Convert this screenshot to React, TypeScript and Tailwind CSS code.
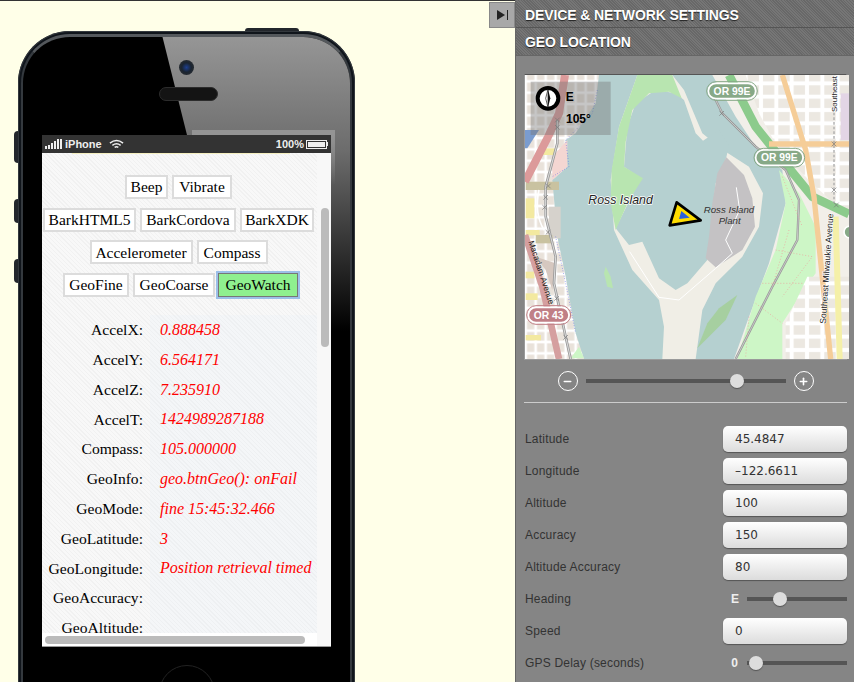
import { Minus, Plus } from "lucide-react";

const buttonRows = [
  [["Beep", "w-[43px]"], ["Vibrate", "w-[60px]"]],
  [["BarkHTML5", "w-[93px]"], ["BarkCordova", "w-[96px]"], ["BarkXDK", "w-[74px]"]],
  [["Accelerometer", "w-[103px]"], ["Compass", "w-[71px]"]],
  [["GeoFine", "w-[66px]"], ["GeoCoarse", "w-[82px]"]],
];

const readings = [
  ["AccelX:", "0.888458"],
  ["AccelY:", "6.564171"],
  ["AccelZ:", "7.235910"],
  ["AccelT:", "1424989287188"],
  ["Compass:", "105.000000"],
  ["GeoInfo:", "geo.btnGeo(): onFail"],
  ["GeoMode:", "fine 15:45:32.466"],
  ["GeoLatitude:", "3"],
  ["GeoLongitude:", "Position retrieval timed"],
  ["GeoAccuracy:", ""],
  ["GeoAltitude:", ""],
];

const railMarks = [
  [125, 150], [125, 172], [98, 348], [90, 382], [87, 412], [97, 487], [123, 685], [150, 802],
  [618, 130], [955, 222], [955, 360], [962, 405],
];

const hatch =
  "bg-[repeating-linear-gradient(45deg,#686868_0,#686868_1px,#767676_1px,#767676_2px)]";

function Field({ label, value }: { label: string; value: string }) {
  return (
    <div className="flex h-[26px] items-center justify-between">
      <span className="ml-px text-[12px] tracking-[0.2px] text-[#333]">{label}</span>
      <div className="flex h-[26px] w-[124px] items-center rounded-[5px] bg-gradient-to-b from-white to-[#dcdcdc] pl-3 font-['DejaVu_Sans',sans-serif] text-[12px] text-[#333] shadow-[0_1px_1px_#555]">
        {value}
      </div>
    </div>
  );
}

function Slider({ className, thumb }: { className: string; thumb: string }) {
  return (
    <div className={`relative h-1 bg-[#555] ${className}`}>
      <div className={`absolute top-[-5px] h-[14px] w-[14px] rounded-full bg-[#ddd] shadow-[0_1px_1px_#555] ${thumb}`} />
    </div>
  );
}

function MapView() {
  const shield = (x: number, y: number, w: number, label: string, fill: string) => (
    <g>
      <rect x={x} y={y} width={w} height={46} rx={23} fill={fill} stroke="#fff" strokeWidth={5} />
      <rect x={x - 5} y={y - 5} width={w + 10} height={56} rx={28} fill="none" stroke={fill} strokeWidth={3} />
      <text x={x + w / 2} y={y + 34} textAnchor="middle" fontSize={31} fontWeight={700} fill="#fff">
        {label}
      </text>
    </g>
  );

  return (
    <svg viewBox="28 15 972 852" className="block h-[284px] w-[324px] font-['Liberation_Sans',sans-serif]">
      <defs>
        <pattern id="streets" width="46" height="40" patternUnits="userSpaceOnUse">
          <rect width="46" height="40" fill="#fff" />
          <rect x="6" y="6" width="34" height="28" fill="#ece8e1" />
        </pattern>
        <pattern id="westStreets" width="30" height="34" patternUnits="userSpaceOnUse">
          <rect width="30" height="34" fill="#fff" />
          <rect x="4" y="4" width="22" height="26" fill="#e9e2da" />
        </pattern>
      </defs>
      <rect x="28" y="15" width="972" height="852" fill="#b5d0d0" />

      {/* east bank */}
      <polygon points="590,15 660,140 720,230 800,300 810,400 760,580 700,740 655,867 1000,867 1000,15" fill="#f2efe9" />
      <polygon points="790,300 850,370 900,470 900,610 870,650 800,760 800,867 665,867 720,680 780,540 810,400" fill="#cdf6c6" />
      <polygon points="690,15 1000,15 1000,440 900,350 790,240 730,130" fill="url(#streets)" />
      <polygon points="875,620 1000,620 1000,867 810,867 810,760" fill="url(#streets)" />
      <rect x="975" y="70" width="25" height="140" fill="#e3d5e5" />
      <path d="M640 15 L720 170 L800 270 L890 380 L1000 432" fill="none" stroke="#8ccb8c" strokeWidth={26} />
      <path d="M800 15 L870 240 L895 380 L945 867" fill="none" stroke="#f5cd98" strokeWidth={16} />
      <path d="M760 222 H1000" stroke="#f5cd98" strokeWidth={16} />
      <path d="M960 440 L972 867" stroke="#f5f0a8" strokeWidth={18} />
      <path d="M955 100 V400" stroke="#aaa" strokeWidth={4} strokeDasharray="8 6" />
      <path d="M585 60 L620 130 L720 230 L810 300 L850 390 L845 510 L770 650 L660 867" fill="none" stroke="#999" strokeWidth={7} />
      <path d="M585 60 L620 130 L720 230 L810 300 L850 390 L845 510 L770 650 L660 867" fill="none" stroke="#ddd" strokeWidth={2} />
      <path d="M800 320 L860 470 M780 540 L890 560 L800 680 M740 640 L860 640 M820 480 L770 650 M720 700 L800 760 M700 740 L690 860" fill="none" stroke="#f09a9a" strokeWidth={2} strokeDasharray="3 6" />

      {/* west bank */}
      <polygon points="28,15 250,15 240,100 180,190 150,210 155,290 110,330 125,500 150,620 180,790 205,867 28,867" fill="url(#westStreets)" />
      <polygon points="110,260 155,210 155,290 110,330" fill="#f4d6d2" />
      <rect x="30" y="335" width="100" height="25" fill="#c9c2a0" />
      <rect x="30" y="385" width="26" height="60" fill="#f3e9a0" />
      <rect x="100" y="410" width="35" height="95" fill="#d6d2cc" />
      <rect x="30" y="480" width="42" height="16" fill="#f3e9a0" />
      <rect x="60" y="495" width="50" height="25" fill="#c9c2a0" />
      <rect x="30" y="605" width="26" height="20" fill="#f3e9a0" />
      <rect x="30" y="670" width="36" height="20" fill="#f3e9a0" />
      <rect x="30" y="795" width="46" height="16" fill="#f3e9a0" />
      <rect x="80" y="235" width="40" height="20" fill="#f3e9a0" />
      <polygon points="60,560 120,580 110,660 90,600" fill="#d6c8c0" />
      <polygon points="165,865 205,865 190,830" fill="#cdf6c6" />
      <path d="M28 335 L95 205 L130 130 L148 15" fill="none" stroke="#dc9a9a" strokeWidth={24} />
      <polygon points="28,180 70,180 35,235 28,235" fill="#7a9ccf" />
      <path d="M28 495 L80 650 L130 867" fill="none" stroke="#d59f9f" strokeWidth={20} />
      <path d="M125 150 L125 220 L90 350 L90 440 L120 560 L115 640 L150 800 L165 867" fill="none" stroke="#999" strokeWidth={8} />
      <path d="M125 150 L125 220 L90 350 L90 440 L120 560 L115 640 L150 800 L165 867" fill="none" stroke="#fff" strokeWidth={2} />
      <path d="M70 360 Q55 430 85 480" fill="none" stroke="#fff" strokeWidth={5} />
      <path d="M245 60 L230 130 L150 210 L160 290 L110 320 M120 500 L150 640 L180 790" fill="none" stroke="#4455ee" strokeWidth={2} strokeDasharray="2 6" />
      {railMarks.map(([x, y]) => (
        <path key={`${x}-${y}`} d={`M${x - 7} ${y - 7} L${x + 7} ${y + 7} M${x + 7} ${y - 7} L${x - 7} ${y + 7}`} stroke="#777" strokeWidth={2} />
      ))}

      {/* island */}
      <polygon points="365,15 310,170 285,330 295,480 350,600 430,690 445,770 440,867 540,867 560,720 600,640 680,560 730,470 742,370 700,290 622,240 560,190 505,60 470,15" fill="#f0eee6" />
      <polygon points="420,60 480,70 505,90 540,190 562,212 610,180 640,225 632,262 600,340 575,570 515,640 480,660 430,625 380,515 340,525 300,475 375,325 325,290 335,170 360,100" fill="#b5d0d0" />
      <polygon points="365,15 470,15 498,85 460,65 400,70 350,120 330,215 325,290 382,325 340,390 300,480 285,400 288,300 310,170" fill="#b8e5b0" />
      <polygon points="665,675 630,750 545,835 575,760 610,715" fill="#a6cfa0" />
      <polygon points="270,590 285,620 292,655 275,650 265,610" fill="#b8e5b0" />
      <polygon points="632,262 685,315 710,385 718,470 680,540 600,592 570,565 580,500 590,400 605,310" fill="#c4c2c4" />
      <path d="M662 352 L672 420 L630 510 L650 550 L600 595 L490 690 L430 682 L342 545" fill="none" stroke="#fff" strokeWidth={3} />

      <text x="218" y="403" fontSize={37} fontStyle="italic" fill="#222" stroke="#fff" strokeWidth={4} paintOrder="stroke">
        Ross Island
      </text>
      <text x="640" y="428" textAnchor="middle" fontSize={29} fontStyle="italic" fill="#333">
        Ross Island
      </text>
      <text x="642" y="463" textAnchor="middle" fontSize={29} fontStyle="italic" fill="#333">
        Plant
      </text>
      <text transform="translate(930 762) rotate(-86)" fontSize={26} fill="#222" stroke="#fff" strokeWidth={3} paintOrder="stroke">
        Southeast Milwaukie Avenue
      </text>
      <text transform="translate(965 126) rotate(-90)" fontSize={24} fill="#222" stroke="#fff" strokeWidth={3} paintOrder="stroke">
        Southeast
      </text>
      <text transform="translate(38 515) rotate(72)" fontSize={25} fill="#222">
        Macadam Avenue
      </text>

      {shield(578, 40, 142, "OR 99E", "#87a987")}
      {shield(720, 240, 142, "OR 99E", "#87a987")}
      {shield(38, 712, 122, "OR 43", "#c07f86")}
      <rect x="985" y="468" width="40" height="36" rx={18} fill="#87a987" stroke="#fff" strokeWidth={5} />

      {/* location arrow */}
      <polygon points="483,397 555,451 462,466" fill="#ffdd00" stroke="#000" strokeWidth={8} strokeLinejoin="round" />
      <polygon points="497,423 522,443 490,447" fill="#2a5fdc" />

      {/* compass overlay */}
      <rect x="45" y="35" width="240" height="160" fill="#777" fillOpacity={0.42} />
      <circle cx="97" cy="85" r="31" fill="#fff" stroke="#000" strokeWidth={12} />
      <polygon points="97,58 104,85 97,112" fill="#111" />
      <polygon points="97,58 90,85 97,112" fill="#fff" stroke="#111" strokeWidth={2} />
      <text x="150" y="92" fontSize={36} fontWeight={700} fill="#000">
        E
      </text>
      <text x="151" y="158" fontSize={36} fontWeight={700} fill="#000">
        105°
      </text>
    </svg>
  );
}

function Phone() {
  return (
    <div className="relative ml-[18px] mt-[30px] h-[680px] w-[337px] rounded-t-[52px] bg-[#10151b] p-[3px] shadow-[inset_0_0_0_1px_#33383d]">
      {/* hardware buttons */}
      <div className="absolute left-[-4px] top-[100px] h-[32px] w-1 rounded-l-sm bg-[#23272c]" />
      <div className="absolute left-[-4px] top-[168px] h-[24px] w-1 rounded-l-sm bg-[#23272c]" />
      <div className="absolute left-[-4px] top-[228px] h-[24px] w-1 rounded-l-sm bg-[#23272c]" />
      <div className="absolute left-[227px] top-[-3px] h-[3px] w-[54px] rounded-t-sm bg-[#23272c]" />

      <div className="relative h-full overflow-hidden rounded-t-[49px] border-x-2 border-t-[3px] border-x-[#34393e] border-t-[#54585c] bg-black pl-[19px] pt-[98px]">
        {/* glass reflection */}
        <svg viewBox="0 0 337 300" className="absolute left-[-5px] top-[-6px] h-[300px] w-[337px]">
          <defs>
            <linearGradient id="gloss" x1="0" y1="0" x2="0" y2="1">
              <stop offset="0" stopColor="#989898" />
              <stop offset="0.4" stopColor="#6c6c6c" />
              <stop offset="1" stopColor="#000" />
            </linearGradient>
          </defs>
          <polygon points="143,0 337,0 337,300 218,300" fill="url(#gloss)" />
        </svg>
        <div className="absolute left-[156px] top-[23px] h-[15px] w-[15px] rounded-full bg-[radial-gradient(circle,#1d3f8f_0,#1a2430_45%,#333_100%)]" />
        <div className="absolute left-[136px] top-[50px] h-[14px] w-[59px] rounded-full border border-[#2c2c2c] bg-[#141414]" />
        <div className="absolute bottom-[-13px] left-[136px] h-[56px] w-[56px] rounded-full border border-[#222]" />

        <Screen />
      </div>
    </div>
  );
}

function Screen() {
  return (
    <div className="relative h-[512px] w-[289px] border-b border-[#999] bg-white">
      <div className="absolute left-[150px] top-[-5px] h-[5px] w-[143px] bg-[#949494]" />
      <div className="absolute left-[289px] top-0 h-[50px] w-1 bg-gradient-to-b from-[#949494] to-transparent" />
      <div className="flex h-[18px] items-center justify-between bg-[#333] px-[3px] font-['Liberation_Sans',sans-serif] text-[11px] font-bold text-[#eee]">
        <div className="flex items-center">
          <svg viewBox="0 0 18 10" className="h-[10px] w-[18px]" fill="#eee">
            <rect x="0" y="7" width="2" height="3" />
            <rect x="3" y="6" width="2" height="4" />
            <rect x="6" y="4" width="2" height="6" />
            <rect x="9" y="2" width="2" height="8" />
            <rect x="12" y="0" width="2" height="10" />
            <rect x="15" y="0" width="2" height="10" />
          </svg>
          <span className="ml-[2px]">iPhone</span>
          <svg viewBox="0 0 16 11" className="ml-[7px] h-[11px] w-[15px]" fill="none" stroke="#eee" strokeWidth="1.6">
            <path d="M1 4 Q8 -1.5 15 4" />
            <path d="M3.6 6.4 Q8 3 12.4 6.4" />
            <path d="M6 8.6 Q8 7.2 10 8.6" />
          </svg>
        </div>
        <div className="flex items-center">
          <span>100%</span>
          <div className="ml-[2px] h-[9px] w-[21px] border border-[#eee] p-[1px]">
            <div className="h-full bg-[#eee]" />
          </div>
          <div className="h-[4px] w-[1px] bg-[#eee]" />
        </div>
      </div>

      <div className="flex h-[493px] overflow-hidden font-['Liberation_Serif',serif]">
        <div className="relative h-[481px] w-[275px] overflow-hidden bg-[repeating-linear-gradient(45deg,#f1f1f1_0,#f1f1f1_1px,#f8f8f8_1px,#f8f8f8_3px)]">
          <div className="mx-auto h-[1px] w-[218px] translate-x-[1px] bg-[#f5efc0]" />
          <div className="flex flex-col gap-[8.7px] pt-[21px]">
            {buttonRows.map((row, i) => (
              <div key={i} className={`flex justify-center gap-1 ${i === 3 ? "pl-[2px]" : "pr-[2px]"}`}>
                {row.map(([label, width]) => (
                  <div
                    key={label}
                    className={`flex h-[24px] items-center justify-center border-2 border-[#dcdcdc] bg-white text-[15.5px] text-black ${width}`}
                  >
                    {label}
                  </div>
                ))}
                {i === 3 && (
                  <div className="ml-[-1px] flex h-[24px] w-[80px] items-center justify-center border border-[#777] bg-[#8ff08f] text-[15.5px] text-black outline-[2px] outline-[#9cc0e8]">
                    GeoWatch
                  </div>
                )}
              </div>
            ))}
          </div>

          <div className="mt-[18px] flex flex-col">
            {readings.map(([label, value]) => (
              <div key={label} className="flex h-[29.8px] shrink-0 items-center">
                <span className="w-[101px] text-right text-[15.6px] text-black">{label}</span>
                <span className="ml-[7px] flex h-full flex-1 items-center whitespace-nowrap bg-[#e6f0f8]/25 pl-[10px] text-[16px] italic text-[#ff0000]">
                  {value}
                </span>
              </div>
            ))}
          </div>
        </div>
        <div className="h-full w-[14px] bg-[#f8f8f8]" />
      </div>

      {/* overlay scrollbars */}
      <div className="absolute left-[279px] top-[73px] h-[139px] w-2 rounded-full bg-[#bbb]" />
      <div className="absolute bottom-0 left-0 flex h-[13px] w-[275px] items-center bg-white pl-[3px]">
        <div className="h-2 w-[260px] rounded-full bg-[#bbb]" />
      </div>
    </div>
  );
}

function Panel() {
  return (
    <div className="flex h-[682px] w-[339px] flex-col border-l border-[#666] bg-[#858585] font-['Liberation_Sans',sans-serif]">
      <div className={`flex h-[28px] shrink-0 items-center border-b border-[#555] pl-[9px] pt-[3px] text-[14px] font-bold tracking-[-0.1px] text-white [text-shadow:0_1px_1px_#222] ${hatch}`}>
        DEVICE &amp; NETWORK SETTINGS
      </div>
      <div className={`flex h-[28px] shrink-0 items-center border-b border-[#666] pl-[9px] pt-[2px] text-[14px] font-bold tracking-[-0.1px] text-white [text-shadow:0_1px_1px_#222] ${hatch}`}>
        GEO LOCATION
      </div>
      <div className="flex flex-col px-[8px] pr-[7px] pt-[18px]">
        <div className="border border-[#9a9a9a] border-t-[#555]">
          <MapView />
        </div>
        <div className="flex items-center justify-center pt-[11px]">
          <div className="flex h-[20px] w-[20px] items-center justify-center rounded-full border border-white text-white">
            <Minus size={11} strokeWidth={3.5} />
          </div>
          <Slider className="mx-2 w-[200px]" thumb="left-[144px]" />
          <div className="flex h-[20px] w-[20px] items-center justify-center rounded-full border border-white text-white">
            <Plus size={11} strokeWidth={3.5} />
          </div>
        </div>
        <div className="mt-[11px] h-px bg-[#ccc]" />

        <div className="flex flex-col gap-[6px] pt-[23px]">
          <Field label="Latitude" value="45.4847" />
          <Field label="Longitude" value="–122.6611" />
          <Field label="Altitude" value="100" />
          <Field label="Accuracy" value="150" />
          <Field label="Altitude Accuracy" value="80" />
          <div className="flex h-[26px] items-center justify-between">
            <span className="ml-px text-[12px] tracking-[0.2px] text-[#333]">Heading</span>
            <div className="flex items-center">
              <span className="mr-[8px] text-[12px] font-bold text-[#eee]">E</span>
              <Slider className="w-[100px]" thumb="left-[26px]" />
            </div>
          </div>
          <Field label="Speed" value="0" />
          <div className="flex h-[26px] items-center justify-between">
            <span className="ml-px text-[12px] tracking-[0.2px] text-[#333]">GPS Delay (seconds)</span>
            <div className="flex items-center">
              <span className="mr-[9px] text-[12px] font-bold text-[#eee]">0</span>
              <Slider className="w-[100px]" thumb="left-[2px]" />
            </div>
          </div>
        </div>
      </div>
    </div>
  );
}

export default function App() {
  return (
    <div className="flex h-[682px] w-[854px] overflow-hidden bg-[#ffffe8]">
      <div className="flex h-full w-[515px] items-start justify-between border-t border-[#333]">
        <Phone />
        <div className="mt-[1px] flex h-[26px] w-[26px] items-center justify-center border border-[#888] bg-[#a8a8a8]">
          <div className="flex items-center">
            <div className="h-0 w-0 border-y-[5px] border-l-[8px] border-y-transparent border-l-[#222]" />
            <div className="ml-[2px] h-[10px] w-[1px] bg-[#222]" />
          </div>
        </div>
      </div>
      <Panel />
    </div>
  );
}
